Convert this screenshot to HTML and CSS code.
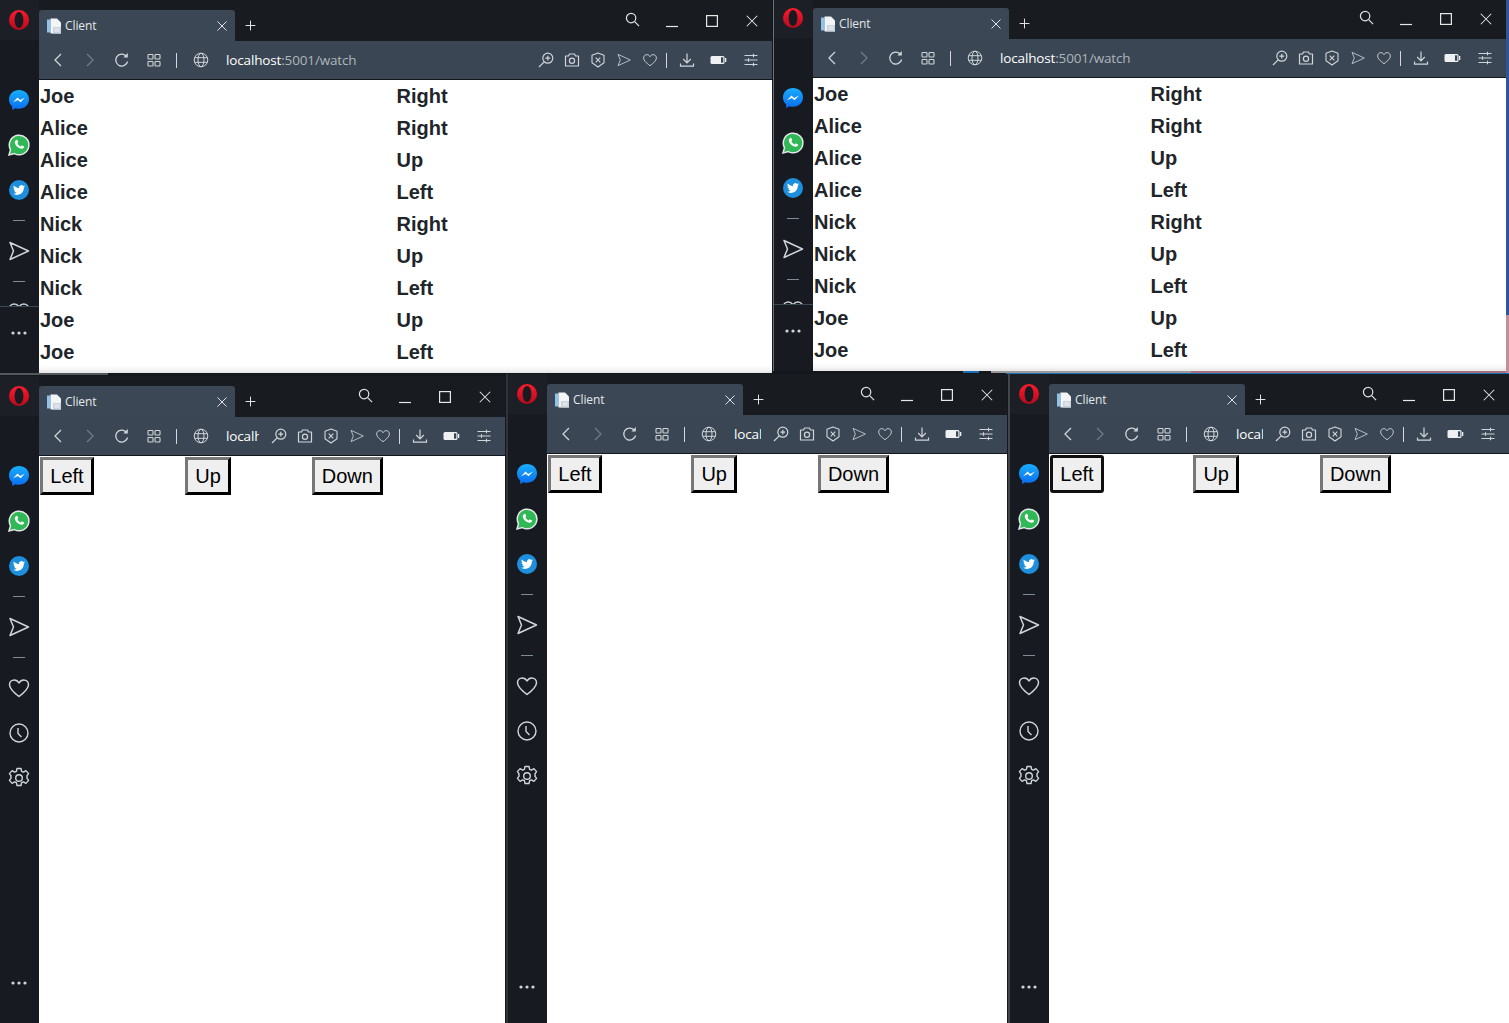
FILE: index.html
```html
<!DOCTYPE html>
<html lang="en">
<head>
    <meta charset="UTF-8">
    <meta name="viewport" content="width=device-width, initial-scale=1.0">
    <title>Client windows</title>
    <link rel="stylesheet" href="styles.css">
</head>
<body>
    <svg class="sprite" xmlns="http://www.w3.org/2000/svg">
        <defs>
            <linearGradient id="opera-red" x1="0" y1="0" x2="0" y2="1">
                <stop offset="0" stop-color="#ff1b2d"/>
                <stop offset="1" stop-color="#b70a1c"/>
            </linearGradient>
            <linearGradient id="messenger-blue" x1="0" y1="0" x2="0" y2="1">
                <stop offset="0" stop-color="#18aefc"/>
                <stop offset="1" stop-color="#0a6cf0"/>
            </linearGradient>
        </defs>
        <symbol id="i-opera" viewBox="0 0 24 24">
            <ellipse cx="12" cy="12" rx="10" ry="10" fill="url(#opera-red)"/>
            <ellipse cx="12" cy="12" rx="4.4" ry="8" fill="#171b21"/>
        </symbol>
        <symbol id="i-messenger" viewBox="0 0 24 24">
            <path d="M12 2C6.3 2 2 6.1 2 11.5c0 2.9 1.2 5.3 3.2 7v3.5l3.2-1.8c1.1.4 2.3.5 3.6.5 5.7 0 10-4.1 10-9.5S17.7 2 12 2z" fill="url(#messenger-blue)"/>
            <path d="M6 14.3l4.5-4.8 2.6 2.4 4.9-2.4-4.5 4.8-2.6-2.4z" fill="#fff"/>
        </symbol>
        <symbol id="i-whatsapp" viewBox="0 0 24 24">
            <path d="M2 22l1.5-5.3A9.8 9.8 0 1 1 7.4 20.6z" fill="#2fb855" stroke="#e4e8ea" stroke-width="1.5"/>
            <path d="M8.8 7.3c.9-.8 1.5-.6 1.8.1l.6 1.5c.1.4-.5 1-.8 1.4.7 1.5 1.7 2.5 3.2 3.2.5-.4.9-1.1 1.3-1l1.7.8c.7.3.7 1-.1 1.8-1 1-2.6.9-4.500-.1-1.600-.9-2.900-2.200-3.700-3.800-.9-1.700-.6-3 .5-3.900z" fill="#fff"/>
        </symbol>
        <symbol id="i-twitter" viewBox="0 0 24 24">
            <circle cx="12" cy="12" r="10" fill="#1d8fdc"/>
            <g transform="translate(6 6) scale(.5)">
                <path d="M23.953 4.57a10 10 0 0 1-2.825.775 4.958 4.958 0 0 0 2.163-2.723c-.951.555-2.005.959-3.127 1.184a4.92 4.92 0 0 0-8.384 4.482C7.69 8.095 4.067 6.13 1.64 3.162a4.822 4.822 0 0 0-.666 2.475c0 1.71.87 3.213 2.188 4.096a4.904 4.904 0 0 1-2.228-.616v.06a4.923 4.923 0 0 0 3.946 4.827 4.996 4.996 0 0 1-2.212.085 4.936 4.936 0 0 0 4.604 3.417 9.867 9.867 0 0 1-6.102 2.105c-.39 0-.779-.023-1.17-.067a13.995 13.995 0 0 0 7.557 2.209c9.053 0 13.998-7.496 13.998-13.985 0-.21 0-.42-.015-.63A9.935 9.935 0 0 0 24 4.59z" fill="#fff"/>
            </g>
        </symbol>
        <symbol id="i-send" viewBox="0 0 24 24">
            <path d="M3 3.5L21.5 12 3 20.5 6.5 12z" fill="none" stroke="currentColor" stroke-width="1.5" stroke-linejoin="round"/>
        </symbol>
        <symbol id="i-heart" viewBox="0 0 24 24">
            <path d="M12 20.5C6 16 2.5 12.8 2.5 8.8 2.5 6 4.7 4 7.2 4c2 0 3.7 1 4.8 3 1.1-2 2.8-3 4.8-3 2.5 0 4.7 2 4.7 4.8 0 4-3.5 7.2-9.5 11.7z" fill="none" stroke="currentColor" stroke-width="1.5" stroke-linejoin="round"/>
        </symbol>
        <symbol id="i-clock" viewBox="0 0 24 24">
            <circle cx="12" cy="12" r="9" fill="none" stroke="currentColor" stroke-width="1.4"/>
            <path d="M11 7v5.5l3.5 3.5" fill="none" stroke="currentColor" stroke-width="1.4"/>
        </symbol>
        <symbol id="i-gear" viewBox="0 0 24 24">
            <circle cx="12" cy="12" r="3.3" fill="none" stroke="currentColor" stroke-width="1.4"/>
            <path d="M10 2.5h4l.6 2.8 1.8.8 2.5-1.5 2.7 3-1.7 2.3.3 2-.3 .2 1.700 2.300-2.700 3-2.500-1.500-1.800.8-.6 2.800h-4l-.6-2.800-1.800-.8-2.500 1.500-2.700-3 1.700-2.300-.3-2 .3-.2-1.700-2.300 2.700-3 2.500 1.500 1.800-.8z" fill="none" stroke="currentColor" stroke-width="1.4" stroke-linejoin="round"/>
        </symbol>
        <symbol id="i-dots" viewBox="0 0 16 4">
            <circle cx="2" cy="2" r="1.6" fill="currentColor"/>
            <circle cx="8" cy="2" r="1.6" fill="currentColor"/>
            <circle cx="14" cy="2" r="1.6" fill="currentColor"/>
        </symbol>
        <symbol id="i-doc" viewBox="0 0 16 16">
            <path d="M1 1.5h3.500v13H1z" fill="#8fc3ea"/>
            <path d="M4.500 .5H11l4 4v11H4.500z" fill="#f2f4f6"/>
            <path d="M7 9h8v6.500H7z" fill="#c9d3dc"/>
            <path d="M8.500 11h5M8.500 13h5" stroke="#f2f4f6"/>
        </symbol>
        <symbol id="i-close" viewBox="0 0 16 16">
            <path d="M2 2l12 12M14 2L2 14" fill="none" stroke="currentColor" stroke-width="1.2"/>
        </symbol>
        <symbol id="i-plus" viewBox="0 0 16 16">
            <path d="M8 2v12M2 8h12" fill="none" stroke="currentColor" stroke-width="1.2"/>
        </symbol>
        <symbol id="i-search" viewBox="0 0 16 16">
            <circle cx="6.5" cy="6.5" r="5" fill="none" stroke="currentColor" stroke-width="1.3"/>
            <path d="M10.3 10.3L15 15" fill="none" stroke="currentColor" stroke-width="1.3"/>
        </symbol>
        <symbol id="i-min" viewBox="0 0 14 14">
            <path d="M1 12.5h12" stroke="currentColor" stroke-width="1.2"/>
        </symbol>
        <symbol id="i-max" viewBox="0 0 14 14">
            <rect x="1.6" y="1.6" width="10.8" height="10.8" fill="none" stroke="currentColor" stroke-width="1.2"/>
        </symbol>
        <symbol id="i-back" viewBox="0 0 16 16">
            <path d="M11 2L5 8l6 6" fill="none" stroke="currentColor" stroke-width="1.3"/>
        </symbol>
        <symbol id="i-forward" viewBox="0 0 16 16">
            <path d="M5 2l6 6-6 6" fill="none" stroke="currentColor" stroke-width="1.3"/>
        </symbol>
        <symbol id="i-reload" viewBox="0 0 16 16">
            <path d="M13.6 9.5A6 6 0 1 1 12 3.8" fill="none" stroke="currentColor" stroke-width="1.3"/>
            <path d="M13.8 1v4.4H9.4z" fill="currentColor"/>
        </symbol>
        <symbol id="i-grid" viewBox="0 0 16 16">
            <rect x="2" y="2.5" width="5" height="4.5" rx=".8" fill="none" stroke="currentColor" stroke-width="1.1"/>
            <rect x="9" y="2.5" width="5" height="4.5" rx=".8" fill="none" stroke="currentColor" stroke-width="1.1"/>
            <rect x="2" y="9.5" width="5" height="4.5" rx=".8" fill="none" stroke="currentColor" stroke-width="1.1"/>
            <rect x="9" y="9.5" width="5" height="4.5" rx=".8" fill="none" stroke="currentColor" stroke-width="1.1"/>
        </symbol>
        <symbol id="i-globe" viewBox="0 0 16 16">
            <g fill="none" stroke="currentColor" stroke-width="1">
                <circle cx="8" cy="8" r="6.8"/>
                <ellipse cx="8" cy="8" rx="3" ry="6.8"/>
                <path d="M1.6 5.7h12.8M1.6 10.3h12.8"/>
            </g>
        </symbol>
        <symbol id="i-zoom" viewBox="0 0 16 16">
            <g fill="none" stroke="currentColor" stroke-width="1.2">
                <circle cx="9.8" cy="6.2" r="5"/>
                <path d="M6.2 9.8L1 15M9.8 3.8v4.8M7.4 6.2h4.8"/>
            </g>
        </symbol>
        <symbol id="i-camera" viewBox="0 0 16 16">
            <g fill="none" stroke="currentColor" stroke-width="1.2">
                <path d="M1.5 4h3l1-2h5l1 2h3v10h-13z" stroke-linejoin="round"/>
                <circle cx="8" cy="8.8" r="2.6"/>
            </g>
        </symbol>
        <symbol id="i-shield" viewBox="0 0 16 16">
            <g fill="none" stroke="currentColor" stroke-width="1.1">
                <path d="M8 1l6 2.3v7.5L8 15 2 10.8V3.3z" stroke-linejoin="round"/>
                <path d="M5.7 5.700l4.600 4.600M10.300 5.700l-4.600 4.600"/>
            </g>
        </symbol>
        <symbol id="i-download" viewBox="0 0 16 16">
            <path d="M8 1.5v9M4.2 7L8 10.8 11.8 7M1.5 11.5v2.7h13v-2.7" fill="none" stroke="currentColor" stroke-width="1.2"/>
        </symbol>
        <symbol id="i-battery" viewBox="0 0 16 8">
            <rect x="0" y="0" width="14" height="8" rx="1.5" fill="currentColor"/>
            <rect x="10.5" y="1.3" width="2.3" height="5.4" fill="#3a4653"/>
            <rect x="14.5" y="2" width="1.3" height="4" fill="currentColor"/>
        </symbol>
        <symbol id="i-sliders" viewBox="0 0 16 16">
            <path d="M1.5 3.5h13M1.5 8h13M1.5 12.5h13M10.5 1.8v3.4M5.5 6.3v3.4M10.5 10.8v3.4" fill="none" stroke="currentColor" stroke-width="1.1"/>
        </symbol>
    </svg>

    <!-- bits of desktop wallpaper showing between the windows -->
    <div class="wall wall-left"></div>
    <div class="wall wall-lump"></div>
    <div class="wall wall-grey"></div>
    <div class="wall wall-pink"></div>
    <div class="wall wall-blue"></div>
    <div class="wall wall-side"></div>
    <div class="wall wall-line"></div>

    <!-- top left window -->
    <section class="window win-one">
        <aside class="sidebar">
            <div class="side-top">
                <div class="side-logo"><svg class="ic-logo"><use href="#i-opera"/></svg></div>
                <div class="side-cell"><svg class="ic-app"><use href="#i-messenger"/></svg></div>
                <div class="side-cell"><svg class="ic-app"><use href="#i-whatsapp"/></svg></div>
                <div class="side-cell"><svg class="ic-app"><use href="#i-twitter"/></svg></div>
                <div class="side-dash"></div>
                <div class="side-cell spaced"><svg class="ic-app"><use href="#i-send"/></svg></div>
                <div class="side-dash"></div>
                <div class="side-cell spaced"><svg class="ic-app"><use href="#i-heart"/></svg></div>
            </div>
            <div class="side-bottom shelf"><svg class="ic-dots"><use href="#i-dots"/></svg></div>
        </aside>
        <div class="main">
            <header class="titlebar">
                <div class="tab"><svg class="ic-doc"><use href="#i-doc"/></svg><span class="tab-title">Client</span><svg class="ic-tabclose"><use href="#i-close"/></svg></div>
                <svg class="ic-plus"><use href="#i-plus"/></svg>
                <div class="caption">
                    <span class="cap-btn"><svg class="ic-search"><use href="#i-search"/></svg></span>
                    <span class="cap-btn"><svg class="ic-cap"><use href="#i-min"/></svg></span>
                    <span class="cap-btn"><svg class="ic-cap"><use href="#i-max"/></svg></span>
                    <span class="cap-btn"><svg class="ic-cap"><use href="#i-close"/></svg></span>
                </div>
            </header>
            <nav class="toolbar">
                <span class="nav-btn"><svg class="ic-nav"><use href="#i-back"/></svg></span>
                <span class="nav-btn dim"><svg class="ic-nav"><use href="#i-forward"/></svg></span>
                <span class="nav-btn"><svg class="ic-nav"><use href="#i-reload"/></svg></span>
                <span class="nav-btn"><svg class="ic-nav"><use href="#i-grid"/></svg></span>
                <span class="sep sep-left"></span>
                <span class="globe"><svg class="ic-nav"><use href="#i-globe"/></svg></span>
                <div class="url"><b>localhost</b>:5001/watch</div>
                <span class="tool-btn"><svg class="ic-tool"><use href="#i-zoom"/></svg></span>
                <span class="tool-btn"><svg class="ic-tool"><use href="#i-camera"/></svg></span>
                <span class="tool-btn"><svg class="ic-tool"><use href="#i-shield"/></svg></span>
                <span class="tool-btn dim"><svg class="ic-tool"><use href="#i-send"/></svg></span>
                <span class="tool-btn"><svg class="ic-tool"><use href="#i-heart"/></svg></span>
                <span class="sep sep-right"></span>
                <span class="tool-btn dl"><svg class="ic-tool"><use href="#i-download"/></svg></span>
                <span class="tool-btn batt"><svg class="ic-batt"><use href="#i-battery"/></svg></span>
                <span class="tool-btn opts"><svg class="ic-tool"><use href="#i-sliders"/></svg></span>
            </nav>
            <main class="page">
                <div class="moves">
                    <div>Joe</div><div>Right</div>
                    <div>Alice</div><div>Right</div>
                    <div>Alice</div><div>Up</div>
                    <div>Alice</div><div>Left</div>
                    <div>Nick</div><div>Right</div>
                    <div>Nick</div><div>Up</div>
                    <div>Nick</div><div>Left</div>
                    <div>Joe</div><div>Up</div>
                    <div>Joe</div><div>Left</div>
                </div>
            </main>
        </div>
    </section>

    <!-- top right window -->
    <section class="window win-two">
        <aside class="sidebar">
            <div class="side-top">
                <div class="side-logo"><svg class="ic-logo"><use href="#i-opera"/></svg></div>
                <div class="side-cell"><svg class="ic-app"><use href="#i-messenger"/></svg></div>
                <div class="side-cell"><svg class="ic-app"><use href="#i-whatsapp"/></svg></div>
                <div class="side-cell"><svg class="ic-app"><use href="#i-twitter"/></svg></div>
                <div class="side-dash"></div>
                <div class="side-cell spaced"><svg class="ic-app"><use href="#i-send"/></svg></div>
                <div class="side-dash"></div>
                <div class="side-cell spaced"><svg class="ic-app"><use href="#i-heart"/></svg></div>
            </div>
            <div class="side-bottom shelf"><svg class="ic-dots"><use href="#i-dots"/></svg></div>
        </aside>
        <div class="main">
            <header class="titlebar">
                <div class="tab"><svg class="ic-doc"><use href="#i-doc"/></svg><span class="tab-title">Client</span><svg class="ic-tabclose"><use href="#i-close"/></svg></div>
                <svg class="ic-plus"><use href="#i-plus"/></svg>
                <div class="caption">
                    <span class="cap-btn"><svg class="ic-search"><use href="#i-search"/></svg></span>
                    <span class="cap-btn"><svg class="ic-cap"><use href="#i-min"/></svg></span>
                    <span class="cap-btn"><svg class="ic-cap"><use href="#i-max"/></svg></span>
                    <span class="cap-btn"><svg class="ic-cap"><use href="#i-close"/></svg></span>
                </div>
            </header>
            <nav class="toolbar">
                <span class="nav-btn"><svg class="ic-nav"><use href="#i-back"/></svg></span>
                <span class="nav-btn dim"><svg class="ic-nav"><use href="#i-forward"/></svg></span>
                <span class="nav-btn"><svg class="ic-nav"><use href="#i-reload"/></svg></span>
                <span class="nav-btn"><svg class="ic-nav"><use href="#i-grid"/></svg></span>
                <span class="sep sep-left"></span>
                <span class="globe"><svg class="ic-nav"><use href="#i-globe"/></svg></span>
                <div class="url"><b>localhost</b>:5001/watch</div>
                <span class="tool-btn"><svg class="ic-tool"><use href="#i-zoom"/></svg></span>
                <span class="tool-btn"><svg class="ic-tool"><use href="#i-camera"/></svg></span>
                <span class="tool-btn"><svg class="ic-tool"><use href="#i-shield"/></svg></span>
                <span class="tool-btn dim"><svg class="ic-tool"><use href="#i-send"/></svg></span>
                <span class="tool-btn"><svg class="ic-tool"><use href="#i-heart"/></svg></span>
                <span class="sep sep-right"></span>
                <span class="tool-btn dl"><svg class="ic-tool"><use href="#i-download"/></svg></span>
                <span class="tool-btn batt"><svg class="ic-batt"><use href="#i-battery"/></svg></span>
                <span class="tool-btn opts"><svg class="ic-tool"><use href="#i-sliders"/></svg></span>
            </nav>
            <main class="page">
                <div class="moves">
                    <div>Joe</div><div>Right</div>
                    <div>Alice</div><div>Right</div>
                    <div>Alice</div><div>Up</div>
                    <div>Alice</div><div>Left</div>
                    <div>Nick</div><div>Right</div>
                    <div>Nick</div><div>Up</div>
                    <div>Nick</div><div>Left</div>
                    <div>Joe</div><div>Up</div>
                    <div>Joe</div><div>Left</div>
                </div>
            </main>
        </div>
    </section>

    <!-- bottom left window -->
    <section class="window win-three">
        <aside class="sidebar">
            <div class="side-top">
                <div class="side-logo"><svg class="ic-logo"><use href="#i-opera"/></svg></div>
                <div class="side-cell"><svg class="ic-app"><use href="#i-messenger"/></svg></div>
                <div class="side-cell"><svg class="ic-app"><use href="#i-whatsapp"/></svg></div>
                <div class="side-cell"><svg class="ic-app"><use href="#i-twitter"/></svg></div>
                <div class="side-dash"></div>
                <div class="side-cell spaced"><svg class="ic-app"><use href="#i-send"/></svg></div>
                <div class="side-dash"></div>
                <div class="side-cell spaced"><svg class="ic-app"><use href="#i-heart"/></svg></div>
                <div class="side-cell"><svg class="ic-app"><use href="#i-clock"/></svg></div>
                <div class="side-cell"><svg class="ic-app"><use href="#i-gear"/></svg></div>
            </div>
            <div class="side-bottom"><svg class="ic-dots"><use href="#i-dots"/></svg></div>
        </aside>
        <div class="main">
            <header class="titlebar">
                <div class="tab"><svg class="ic-doc"><use href="#i-doc"/></svg><span class="tab-title">Client</span><svg class="ic-tabclose"><use href="#i-close"/></svg></div>
                <svg class="ic-plus"><use href="#i-plus"/></svg>
                <div class="caption">
                    <span class="cap-btn"><svg class="ic-search"><use href="#i-search"/></svg></span>
                    <span class="cap-btn"><svg class="ic-cap"><use href="#i-min"/></svg></span>
                    <span class="cap-btn"><svg class="ic-cap"><use href="#i-max"/></svg></span>
                    <span class="cap-btn"><svg class="ic-cap"><use href="#i-close"/></svg></span>
                </div>
            </header>
            <nav class="toolbar">
                <span class="nav-btn"><svg class="ic-nav"><use href="#i-back"/></svg></span>
                <span class="nav-btn dim"><svg class="ic-nav"><use href="#i-forward"/></svg></span>
                <span class="nav-btn"><svg class="ic-nav"><use href="#i-reload"/></svg></span>
                <span class="nav-btn"><svg class="ic-nav"><use href="#i-grid"/></svg></span>
                <span class="sep sep-left"></span>
                <span class="globe"><svg class="ic-nav"><use href="#i-globe"/></svg></span>
                <div class="url"><b>localhost</b>:5001/watch</div>
                <span class="tool-btn"><svg class="ic-tool"><use href="#i-zoom"/></svg></span>
                <span class="tool-btn"><svg class="ic-tool"><use href="#i-camera"/></svg></span>
                <span class="tool-btn"><svg class="ic-tool"><use href="#i-shield"/></svg></span>
                <span class="tool-btn dim"><svg class="ic-tool"><use href="#i-send"/></svg></span>
                <span class="tool-btn"><svg class="ic-tool"><use href="#i-heart"/></svg></span>
                <span class="sep sep-right"></span>
                <span class="tool-btn dl"><svg class="ic-tool"><use href="#i-download"/></svg></span>
                <span class="tool-btn batt"><svg class="ic-batt"><use href="#i-battery"/></svg></span>
                <span class="tool-btn opts"><svg class="ic-tool"><use href="#i-sliders"/></svg></span>
            </nav>
            <main class="page">
                <div class="controls">
                    <button class="move-btn">Left</button>
                    <button class="move-btn">Up</button>
                    <button class="move-btn">Down</button>
                </div>
            </main>
        </div>
    </section>

    <!-- bottom middle window -->
    <section class="window win-four">
        <aside class="sidebar">
            <div class="side-top">
                <div class="side-logo"><svg class="ic-logo"><use href="#i-opera"/></svg></div>
                <div class="side-cell"><svg class="ic-app"><use href="#i-messenger"/></svg></div>
                <div class="side-cell"><svg class="ic-app"><use href="#i-whatsapp"/></svg></div>
                <div class="side-cell"><svg class="ic-app"><use href="#i-twitter"/></svg></div>
                <div class="side-dash"></div>
                <div class="side-cell spaced"><svg class="ic-app"><use href="#i-send"/></svg></div>
                <div class="side-dash"></div>
                <div class="side-cell spaced"><svg class="ic-app"><use href="#i-heart"/></svg></div>
                <div class="side-cell"><svg class="ic-app"><use href="#i-clock"/></svg></div>
                <div class="side-cell"><svg class="ic-app"><use href="#i-gear"/></svg></div>
            </div>
            <div class="side-bottom"><svg class="ic-dots"><use href="#i-dots"/></svg></div>
        </aside>
        <div class="main">
            <header class="titlebar">
                <div class="tab"><svg class="ic-doc"><use href="#i-doc"/></svg><span class="tab-title">Client</span><svg class="ic-tabclose"><use href="#i-close"/></svg></div>
                <svg class="ic-plus"><use href="#i-plus"/></svg>
                <div class="caption">
                    <span class="cap-btn"><svg class="ic-search"><use href="#i-search"/></svg></span>
                    <span class="cap-btn"><svg class="ic-cap"><use href="#i-min"/></svg></span>
                    <span class="cap-btn"><svg class="ic-cap"><use href="#i-max"/></svg></span>
                    <span class="cap-btn"><svg class="ic-cap"><use href="#i-close"/></svg></span>
                </div>
            </header>
            <nav class="toolbar">
                <span class="nav-btn"><svg class="ic-nav"><use href="#i-back"/></svg></span>
                <span class="nav-btn dim"><svg class="ic-nav"><use href="#i-forward"/></svg></span>
                <span class="nav-btn"><svg class="ic-nav"><use href="#i-reload"/></svg></span>
                <span class="nav-btn"><svg class="ic-nav"><use href="#i-grid"/></svg></span>
                <span class="sep sep-left"></span>
                <span class="globe"><svg class="ic-nav"><use href="#i-globe"/></svg></span>
                <div class="url"><b>localhost</b>:5001/watch</div>
                <span class="tool-btn"><svg class="ic-tool"><use href="#i-zoom"/></svg></span>
                <span class="tool-btn"><svg class="ic-tool"><use href="#i-camera"/></svg></span>
                <span class="tool-btn"><svg class="ic-tool"><use href="#i-shield"/></svg></span>
                <span class="tool-btn dim"><svg class="ic-tool"><use href="#i-send"/></svg></span>
                <span class="tool-btn"><svg class="ic-tool"><use href="#i-heart"/></svg></span>
                <span class="sep sep-right"></span>
                <span class="tool-btn dl"><svg class="ic-tool"><use href="#i-download"/></svg></span>
                <span class="tool-btn batt"><svg class="ic-batt"><use href="#i-battery"/></svg></span>
                <span class="tool-btn opts"><svg class="ic-tool"><use href="#i-sliders"/></svg></span>
            </nav>
            <main class="page">
                <div class="controls">
                    <button class="move-btn">Left</button>
                    <button class="move-btn">Up</button>
                    <button class="move-btn">Down</button>
                </div>
            </main>
        </div>
    </section>

    <!-- bottom right window -->
    <section class="window win-five">
        <aside class="sidebar">
            <div class="side-top">
                <div class="side-logo"><svg class="ic-logo"><use href="#i-opera"/></svg></div>
                <div class="side-cell"><svg class="ic-app"><use href="#i-messenger"/></svg></div>
                <div class="side-cell"><svg class="ic-app"><use href="#i-whatsapp"/></svg></div>
                <div class="side-cell"><svg class="ic-app"><use href="#i-twitter"/></svg></div>
                <div class="side-dash"></div>
                <div class="side-cell spaced"><svg class="ic-app"><use href="#i-send"/></svg></div>
                <div class="side-dash"></div>
                <div class="side-cell spaced"><svg class="ic-app"><use href="#i-heart"/></svg></div>
                <div class="side-cell"><svg class="ic-app"><use href="#i-clock"/></svg></div>
                <div class="side-cell"><svg class="ic-app"><use href="#i-gear"/></svg></div>
            </div>
            <div class="side-bottom"><svg class="ic-dots"><use href="#i-dots"/></svg></div>
        </aside>
        <div class="main">
            <header class="titlebar">
                <div class="tab"><svg class="ic-doc"><use href="#i-doc"/></svg><span class="tab-title">Client</span><svg class="ic-tabclose"><use href="#i-close"/></svg></div>
                <svg class="ic-plus"><use href="#i-plus"/></svg>
                <div class="caption">
                    <span class="cap-btn"><svg class="ic-search"><use href="#i-search"/></svg></span>
                    <span class="cap-btn"><svg class="ic-cap"><use href="#i-min"/></svg></span>
                    <span class="cap-btn"><svg class="ic-cap"><use href="#i-max"/></svg></span>
                    <span class="cap-btn"><svg class="ic-cap"><use href="#i-close"/></svg></span>
                </div>
            </header>
            <nav class="toolbar">
                <span class="nav-btn"><svg class="ic-nav"><use href="#i-back"/></svg></span>
                <span class="nav-btn dim"><svg class="ic-nav"><use href="#i-forward"/></svg></span>
                <span class="nav-btn"><svg class="ic-nav"><use href="#i-reload"/></svg></span>
                <span class="nav-btn"><svg class="ic-nav"><use href="#i-grid"/></svg></span>
                <span class="sep sep-left"></span>
                <span class="globe"><svg class="ic-nav"><use href="#i-globe"/></svg></span>
                <div class="url"><b>localhost</b>:5001/watch</div>
                <span class="tool-btn"><svg class="ic-tool"><use href="#i-zoom"/></svg></span>
                <span class="tool-btn"><svg class="ic-tool"><use href="#i-camera"/></svg></span>
                <span class="tool-btn"><svg class="ic-tool"><use href="#i-shield"/></svg></span>
                <span class="tool-btn dim"><svg class="ic-tool"><use href="#i-send"/></svg></span>
                <span class="tool-btn"><svg class="ic-tool"><use href="#i-heart"/></svg></span>
                <span class="sep sep-right"></span>
                <span class="tool-btn dl"><svg class="ic-tool"><use href="#i-download"/></svg></span>
                <span class="tool-btn batt"><svg class="ic-batt"><use href="#i-battery"/></svg></span>
                <span class="tool-btn opts"><svg class="ic-tool"><use href="#i-sliders"/></svg></span>
            </nav>
            <main class="page">
                <div class="controls">
                    <button class="move-btn focused">Left</button>
                    <button class="move-btn">Up</button>
                    <button class="move-btn">Down</button>
                </div>
            </main>
        </div>
    </section>
</body>
</html>
```

FILE: styles.css
```css
html, body {
    height: 100%;
    margin: 0;
    overflow: hidden;
}
body {
    background-color: #14171c;
    font-family: "Open Sans", "Liberation Sans", sans-serif;
}
.sprite {
    position: absolute;
    width: 0;
    height: 0;
}
svg {
    display: block;
    flex: none;
}

/* wallpaper strips */
.wall {
    position: absolute;
}
.wall-left {
    left: 0;
    top: 373px;
    width: 108px;
    height: 2px;
    background-color: #55585c;
}
.wall-lump {
    left: 963px;
    top: 370px;
    width: 16px;
    height: 3px;
    background-color: #1d6fb3;
}
.wall-grey {
    left: 991px;
    top: 370px;
    width: 200px;
    height: 3px;
    background-color: #9a9a9a;
}
.wall-pink {
    left: 1191px;
    top: 370px;
    width: 318px;
    height: 3px;
    background-color: #a86f7e;
}
.wall-blue {
    left: 1506px;
    top: 0;
    width: 3px;
    height: 315px;
    background-color: #2f5597;
}
.wall-side {
    left: 1506px;
    top: 315px;
    width: 3px;
    height: 58px;
    background-color: #c58d9c;
}
.wall-line {
    left: 1006px;
    top: 373px;
    width: 503px;
    height: 1px;
    background-color: #1d6fb3;
}

/* windows sit on a free desktop */
.window {
    position: absolute;
    display: flex;
    overflow: hidden;
    background-color: #181c21;
}
.win-one {
    left: 0;
    top: 0;
    width: 772px;
    height: 373px;
}
.win-two {
    left: 774px;
    top: -2px;
    width: 732px;
    height: 373px;
    box-shadow: -1px 0 0 #6c6f73;
}
.win-three {
    left: 0;
    top: 376px;
    width: 505px;
    height: 647px;
}
.win-four {
    left: 508px;
    top: 374px;
    width: 499px;
    height: 653px;
    box-shadow: -2px 0 0 #303337;
}
.win-five {
    left: 1010px;
    top: 374px;
    width: 499px;
    height: 653px;
    box-shadow: -2px 0 0 #44474a;
}

/* sidebar */
.sidebar {
    display: flex;
    flex-direction: column;
    flex: none;
    width: 39px;
    background-color: #171b21;
    color: #cfd5da;
}
.side-top {
    flex: 1;
    min-height: 0;
    overflow: hidden;
}
.side-logo {
    display: flex;
    align-items: center;
    justify-content: center;
    height: 40px;
    padding-right: 1px;
    box-sizing: border-box;
    background-color: #1c2026;
    margin-bottom: 37px;
}
.side-cell {
    display: flex;
    align-items: center;
    justify-content: center;
    height: 45px;
    padding-right: 1px;
}
.side-cell.spaced {
    margin-top: 7px;
}
.side-dash {
    width: 12px;
    height: 1px;
    margin: 8px 0 0 13px;
    background-color: #7f8c98;
}
.side-bottom {
    display: flex;
    align-items: flex-end;
    justify-content: center;
    flex: none;
    height: 67px;
    padding: 0 1px 38px 0;
    box-sizing: border-box;
}
.side-bottom.shelf {
    border-top: 1px solid #3c4854;
}
.ic-logo {
    width: 24px;
    height: 24px;
}
.ic-app {
    width: 24px;
    height: 24px;
}
.ic-dots {
    width: 16px;
    height: 4px;
}

/* title bar */
.main {
    display: flex;
    flex-direction: column;
    flex: 1;
    min-width: 0;
}
.titlebar {
    display: flex;
    align-items: flex-end;
    flex: none;
    height: 41px;
    color: #e6e8ea;
}
.tab {
    display: flex;
    align-items: center;
    flex: none;
    width: 196px;
    height: 31px;
    padding: 0 6px 0 7px;
    box-sizing: border-box;
    background-color: #3b4754;
    border-radius: 3px 3px 0 0;
}
.tab-title {
    flex: 1;
    margin-left: 3px;
    font-size: 12px;
    letter-spacing: -0.1px;
    color: #e3e7ea;
}
.ic-doc {
    width: 16px;
    height: 16px;
}
.ic-tabclose {
    width: 12px;
    height: 12px;
    margin-right: 1px;
    color: #f2f4f5;
}
.ic-plus {
    width: 13px;
    height: 13px;
    margin: 0 0 9px 9px;
}
.caption {
    display: flex;
    margin-left: auto;
    height: 40px;
}
.cap-btn {
    display: flex;
    align-items: center;
    justify-content: center;
    width: 40px;
    height: 40px;
}
.ic-search {
    width: 15px;
    height: 15px;
    margin-bottom: 4px;
    color: #dfe2e5;
}
.ic-cap {
    width: 14px;
    height: 14px;
}

/* toolbar */
.toolbar {
    display: flex;
    align-items: center;
    flex: none;
    height: 38px;
    padding: 0 5px 0 3px;
    background-color: #3a4653;
    border-bottom: 1px solid #14171c;
    color: #d0d5da;
}
.nav-btn {
    display: flex;
    justify-content: center;
    flex: none;
    width: 32px;
}
.dim {
    color: #717b86;
}
.tool-btn.dim {
    color: #b4bbc2;
}
.sep {
    flex: none;
    width: 1px;
    height: 15px;
    background-color: #d5d9dd;
}
.sep-left {
    margin-left: 6px;
}
.sep-right {
    margin-left: 3px;
}
.globe {
    display: flex;
    justify-content: center;
    flex: none;
    width: 24px;
    margin-left: 12px;
}
.url {
    flex: 1;
    min-width: 0;
    margin: 0 7px 0 13px;
    overflow: hidden;
    white-space: nowrap;
    font-size: 13.5px;
    letter-spacing: -0.15px;
    color: #aeb5bc;
}
.url b {
    font-weight: 400;
    color: #fff;
}
.tool-btn {
    display: flex;
    align-items: center;
    justify-content: center;
    flex: none;
    width: 26px;
}
.tool-btn.dl {
    width: 24px;
    margin-left: 8px;
}
.tool-btn.batt {
    width: 32px;
    margin-left: 3px;
}
.tool-btn.opts {
    width: 32px;
    margin-left: 1px;
}
.ic-nav {
    width: 16px;
    height: 16px;
}
.ic-tool {
    width: 16px;
    height: 16px;
}
.ic-batt {
    width: 17px;
    height: 8px;
    color: #eef0f2;
}

/* page content */
.page {
    flex: 1;
    min-height: 0;
    background-color: #fff;
    font-family: "Liberation Sans", Arial, sans-serif;
}
.win-one .page,
.win-two .page {
    box-shadow: inset 0 -8px 8px -8px rgba(0, 0, 0, 0.2);
}
.moves {
    display: grid;
    grid-template-columns: calc(50% - 10px) 1fr;
    grid-auto-rows: 32px;
    line-height: 32px;
    font-size: 20px;
    font-weight: 700;
    color: #212529;
}
.moves div {
    padding-left: 1px;
}
.controls {
    display: grid;
    grid-template-columns: calc(31.4% - 1px) 126.5px auto;
    justify-items: start;
    padding: 1px 0 0 1px;
}
.move-btn {
    padding: 4.5px 7.3px;
    font-family: inherit;
    font-size: 20px;
    color: #000;
    background-color: #efefef;
    border: 3px outset #767676;
    border-color: #767676 #1f1f1f #1f1f1f #767676;
}
.move-btn.focused {
    border: 3px solid #101010;
    border-radius: 3px;
}
```
